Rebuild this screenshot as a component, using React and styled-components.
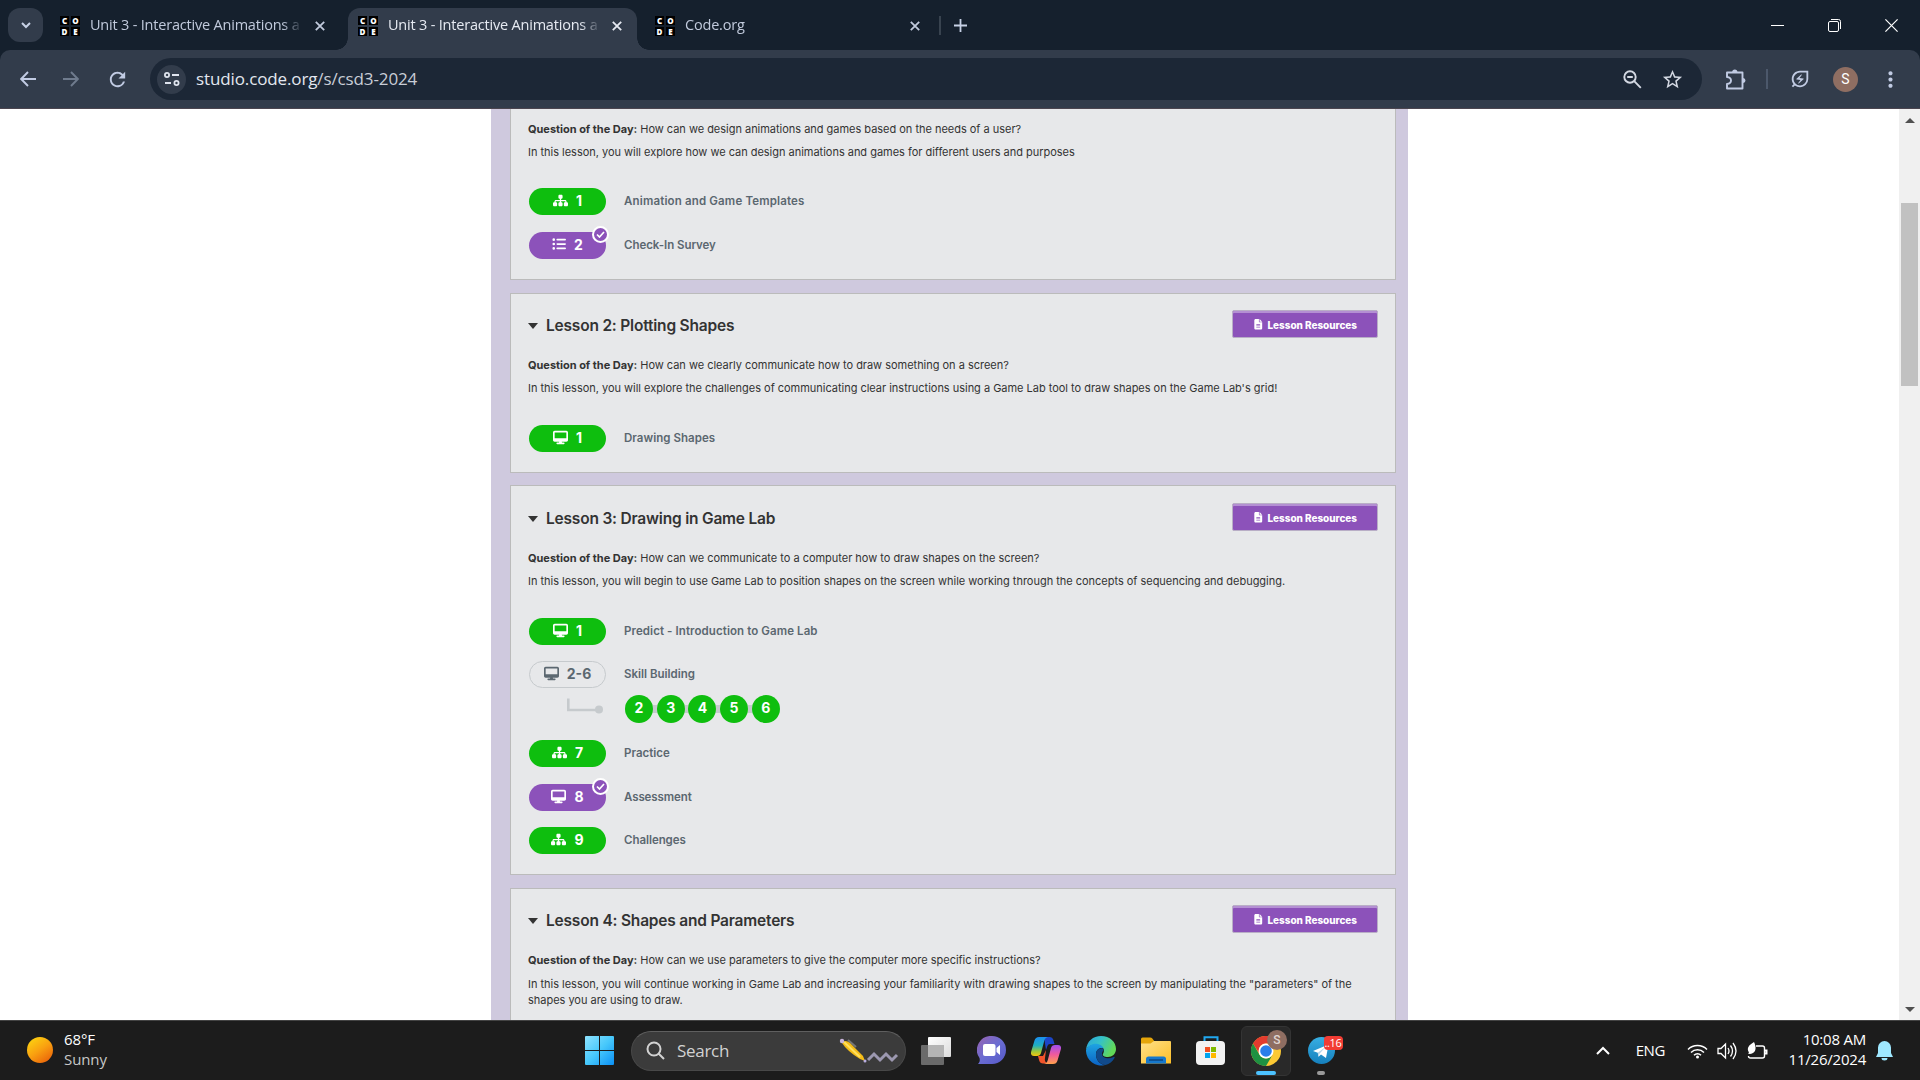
import React from 'react';
import styled, { createGlobalStyle, css } from 'styled-components';
import { FaSitemap, FaListUl, FaDesktop, FaFileLines, FaCheck } from 'react-icons/fa6';
import {
  MdRefresh, MdZoomOut, MdStarBorder, MdOutlineEnergySavingsLeaf, MdMoreVert,
} from 'react-icons/md';

const Global = createGlobalStyle`
  * { box-sizing: border-box; }
  body { margin: 0; overflow: hidden; background: #fff; }
  svg { display: block; flex: none; }
  p, h2 { margin: 0; }
`;

const ui = "'Open Sans', 'Noto Sans', sans-serif";
const body = "Inter, 'Open Sans', sans-serif";

const Screen = styled.div`
  width: 1920px;
  height: 1080px;
  display: flex;
  flex-direction: column;
  overflow: hidden;
  font-family: ${ui};
  white-space: nowrap;
`;
const Spacer = styled.div`
  height: ${p => p.$h}px;
`;

/* ---------- browser chrome ---------- */
const TabStrip = styled.header`
  height: 50px;
  flex: none;
  display: flex;
  align-items: center;
  background: #15202d;
  padding-left: 8px;
  color: #c7d1e6;
`;
const TabSearch = styled.div`
  width: 35px;
  height: 34px;
  border-radius: 12px;
  background: #323c4b;
  display: grid;
  place-items: center;
  margin-right: 7px;
`;
const Tab = styled.div`
  position: relative;
  width: ${p => p.$w}px;
  height: 42px;
  margin-top: 8px;
  margin-left: ${p => p.$ml || 0}px;
  padding: 0 ${p => p.$pr}px 7px 10px;
  display: flex;
  align-items: center;
  border-radius: 12px 12px 0 0;
  color: ${p => (p.$active ? '#e6eaf2' : '#c1cadc')};
  background: ${p => (p.$active ? '#323c4b' : 'transparent')};
  ${p => p.$active && css`
    &::before, &::after {
      content: '';
      position: absolute;
      bottom: 0;
      width: 12px;
      height: 12px;
    }
    &::before { left: -12px; background: radial-gradient(circle at 0 0, transparent 11.5px, #323c4b 12px); }
    &::after { right: -12px; background: radial-gradient(circle at 100% 0, transparent 11.5px, #323c4b 12px); }
  `}
`;
const TabTitle = styled.span`
  width: 218px;
  margin-left: 10px;
  padding-bottom: 1px;
  font-size: 14.5px;
  line-height: 22px;
  letter-spacing: -0.2px;
  mask-image: linear-gradient(90deg, #000 192px, transparent 213px);
`;
const TabClose = styled.span`
  margin-left: auto;
`;
const FavGrid = styled.span`
  width: 20px;
  height: 20px;
  flex: none;
  display: grid;
  grid-template-columns: 9px 9px;
  grid-template-rows: 9px 9px;
  gap: 2px;
`;
const FavCell = styled.span`
  background: #000;
  color: #fff;
  font: 800 8px/9px ${ui};
  text-align: center;
`;
const StripDivider = styled.span`
  width: 2px;
  height: 19px;
  background: #38434f;
  margin: 0 13px 0 12px;
`;
const WindowControls = styled.div`
  margin-left: auto;
  display: flex;
  align-items: center;
  gap: 44px;
  padding-right: 22px;
  color: #fff;
`;
const ToolbarBack = styled.div`
  flex: none;
  background: #15202d;
`;
const Toolbar = styled.div`
  height: 59px;
  display: flex;
  align-items: center;
  background: #323c4b;
  border-radius: 10px 10px 0 0;
  border-bottom: 1px solid #4b454f;
  color: #c1cbe3;
`;
const NavButtons = styled.div`
  width: 150px;
  display: flex;
  align-items: center;
  padding-left: 20px;
  gap: 27px;
`;
const Omnibox = styled.div`
  width: 1552px;
  height: 42px;
  border-radius: 21px;
  background: #1c2736;
  display: flex;
  align-items: center;
  padding: 0 18px 0 7px;
`;
const SiteInfo = styled.span`
  width: 29px;
  height: 29px;
  border-radius: 50%;
  background: #323c4b;
  display: grid;
  place-items: center;
`;
const Url = styled.span`
  flex: 1;
  margin-left: 10px;
  font-size: 17px;
  letter-spacing: -0.12px;
  line-height: 26px;
  color: #e3e7f0;
`;
const UrlPath = styled.span`
  color: #c9cdd6;
`;
const OmniIcons = styled.span`
  display: flex;
  gap: 17px;
  color: #d3d8e2;
`;
const ToolbarRight = styled.div`
  flex: 1;
  display: flex;
  align-items: center;
  padding-left: 23px;
`;
const ToolbarDivider = styled.span`
  width: 2px;
  height: 20px;
  background: #4c586b;
  margin: 0 21px 0 20px;
`;
const Avatar = styled.span`
  width: 25px;
  height: 25px;
  border-radius: 50%;
  background: #8f6e62;
  color: #fff;
  font: 400 14px/25px Roboto, sans-serif;
  text-align: center;
  margin: 0 20px 0 22px;
`;

/* ---------- page ---------- */
const Viewport = styled.div`
  height: 911px;
  flex: none;
  display: flex;
  overflow: hidden;
  background: #fff;
`;
const PageArea = styled.main`
  width: 1899px;
  padding-left: 491px;
`;
const Unit = styled.div`
  width: 917px;
  height: 100%;
  padding: 0 12px 0 19px;
  background: #cfc9de;
  display: flex;
  flex-direction: column;
  font-family: ${body};
`;
const Card = styled.section`
  height: ${p => p.$h}px;
  flex: none;
  margin-bottom: ${p => p.$gap}px;
  border: 1px solid #bbb;
  border-top-width: ${p => (p.$cut ? 0 : 1)}px;
  background: #e7e8ea;
  padding: ${p => p.$top ?? 16}px 17px 0 17px;
  color: #333;
`;
const CardHead = styled.div`
  display: flex;
  align-items: flex-start;
  height: 47px;
`;
const Caret = styled.span`
  width: 0;
  border: 5px solid transparent;
  border-top: 6px solid #333;
  border-bottom: 0;
  margin: 13px 8px 0 0;
`;
const CardTitle = styled.h2`
  flex: 1;
  font-size: 15.5px;
  font-weight: 600;
  line-height: 31px;
  letter-spacing: -0.2px;
`;
const ResourceButton = styled.button`
  width: 146px;
  height: 28px;
  padding: 1px 0 0;
  display: flex;
  align-items: center;
  justify-content: center;
  gap: 4px;
  border: 1px solid #b9aec6;
  box-shadow: inset 0 2px 0 #b48fd3;
  border-radius: 2px;
  background: #8c52ba;
  color: #fff;
  font: 800 10px/16px ${body};
  letter-spacing: -0.05px;
`;
const Desc = styled.p`
  height: ${p => p.$h || 23}px;
  font-size: 11px;
  line-height: 16px;
  letter-spacing: -0.02px;
`;
const Strong = styled.strong`
  font-weight: 700;
`;
const Level = styled.div`
  display: flex;
  align-items: center;
  height: 27px;
  margin: 0 0 ${p => p.$gap}px 1px;
`;
const tones = { green: '#0ebe0e', purple: '#8c52ba' };
const Pill = styled.span`
  position: relative;
  width: 77px;
  height: 27px;
  border-radius: 14px;
  padding-bottom: 3px;
  display: flex;
  align-items: center;
  justify-content: center;
  gap: 8px;
  background: ${p => tones[p.$tone] || 'transparent'};
  border: ${p => (tones[p.$tone] ? 'none' : '1px solid #c6cacd')};
  color: ${p => (tones[p.$tone] ? '#fff' : '#5b6770')};
  font-size: 14px;
  font-weight: 700;
`;
const CheckBadge = styled.span`
  position: absolute;
  top: -6px;
  right: -3px;
  width: 17px;
  height: 17px;
  border-radius: 50%;
  border: 2px solid #fff;
  background: #8c52ba;
  display: grid;
  place-items: center;
`;
const LevelName = styled.span`
  margin-left: 18px;
  padding-bottom: 1px;
  font-size: 11.5px;
  font-weight: 600;
  color: #5b6770;
  letter-spacing: ${p => p.$track || 0}px;
`;
const BubbleRow = styled.div`
  display: flex;
  align-items: center;
  height: 28px;
  margin: 7px 0 17px;
  padding-left: 39px;
`;
const Elbow = styled.span`
  width: 58px;
  margin-top: -7px;
`;
const Bubble = styled.span`
  width: 28px;
  height: 28px;
  border-radius: 50%;
  background: #0ebe0e;
  color: #fff;
  font-size: 14px;
  font-weight: 700;
  line-height: 25px;
  text-align: center;
`;
const Link = styled.span`
  width: 3.7px;
  height: 8px;
  background: #c6cacd;
`;
const Scrollbar = styled.div`
  width: 21px;
  background: #f0f0f0;
  display: flex;
  flex-direction: column;
  align-items: center;
  padding: 9px 0 8px;
`;
const ScrollArrow = styled.span`
  border: 5px solid transparent;
  border-${p => (p.$up ? 'bottom' : 'top')}: 5px solid #505050;
  border-${p => (p.$up ? 'top' : 'bottom')}: 0;
`;
const ScrollThumb = styled.span`
  width: 17px;
  height: 183px;
  margin: 80px 0 auto;
  background: #c1c1c1;
`;

/* ---------- taskbar ---------- */
const Taskbar = styled.footer`
  height: 60px;
  flex: none;
  display: flex;
  align-items: center;
  background: #1c1c1c;
  border-top: 1px solid #434343;
  color: #fff;
`;
const Weather = styled.div`
  width: 585px;
  padding-left: 27px;
  display: flex;
  align-items: center;
  gap: 11px;
  font-size: 15px;
  line-height: 20px;
  letter-spacing: -0.1px;
`;
const WeatherText = styled.div`
  padding-bottom: 4px;
`;
const Sun = styled.span`
  width: 26px;
  height: 26px;
  margin-bottom: 2px;
  border-radius: 50%;
  background: linear-gradient(145deg, #fcd010 10%, #f9a010 50%, #ea640a 90%);
`;
const Muted = styled.div`
  color: #c8c8c8;
`;
const SearchBox = styled.div`
  width: 275px;
  height: 40px;
  margin: 0 2.5px 0 17px;
  padding: 0 6px 0 14px;
  border-radius: 20px;
  border: 1px solid #484848;
  border-top-color: #5f5f5f;
  background: #3b3b3b;
  display: flex;
  align-items: center;
  font-size: 17px;
  color: #d2d2d2;
`;
const SearchLabel = styled.span`
  flex: 1;
  margin-left: 12px;
  letter-spacing: -0.3px;
`;
const Apps = styled.div`
  display: flex;
  align-items: center;
`;
const AppSlot = styled.span`
  position: relative;
  width: 55px;
  height: 50px;
  display: grid;
  place-items: center;
`;
const ActiveApp = styled(AppSlot)`
  width: 50px;
  margin: 0 2.5px;
  border-radius: 6px;
  border: 1px solid #343434;
  background: #292929;
`;
const RunMark = styled.span`
  position: absolute;
  bottom: ${p => (p.$wide ? 0 : 1)}px;
  left: 50%;
  width: ${p => (p.$wide ? 20 : 8)}px;
  height: 4px;
  margin-left: ${p => (p.$wide ? -10 : -4)}px;
  border-radius: 2px;
  background: ${p => (p.$wide ? '#4cc2ff' : '#9a9a9a')};
`;
const MiniAvatar = styled.span`
  position: absolute;
  top: 3px;
  right: 3px;
  width: 20px;
  height: 20px;
  border-radius: 50%;
  background: #8f6e62;
  color: #e0d6d2;
  font: 500 12px/20px Roboto, sans-serif;
  text-align: center;
`;
const Count = styled.span`
  position: absolute;
  top: 10px;
  left: 30px;
  width: 19px;
  height: 14px;
  border-radius: 4px;
  background: #f23c34;
  font-size: 11px;
  line-height: 14px;
  text-align: center;
  letter-spacing: -0.3px;
`;
const Tray = styled.div`
  margin-left: auto;
  padding-right: 27px;
  display: flex;
  align-items: center;
  font-size: 15px;
`;
const Lang = styled.span`
  margin: 0 22px 0 26px;
  padding-bottom: 1px;
  letter-spacing: -0.4px;
`;
const TrayIcons = styled.span`
  display: flex;
  align-items: center;
  gap: 9px;
`;
const Clock = styled.div`
  margin: 0 10px 0 20px;
  padding-bottom: 4px;
  width: 78px;
  display: flex;
  flex-direction: column;
  align-items: flex-end;
  line-height: 20px;
  letter-spacing: -0.22px;
`;

const Favicon = () => (
  <FavGrid>{['C', 'O', 'D', 'E'].map(c => <FavCell key={c}>{c}</FavCell>)}</FavGrid>
);
const Stroke = ({ w, h = w, d, sw = 2 }) => (
  <svg width={w} height={h} viewBox={`0 0 ${w} ${h}`} fill="none" stroke="currentColor" strokeWidth={sw}>
    <path d={d} />
  </svg>
);
const CloseX = () => <Stroke w={10} d="M.8.8 9.2 9.2M9.2.8.8 9.2" sw={1.8} />;

const ICONS = { site: FaSitemap, list: FaListUl, desk: FaDesktop };

function LevelRow({ tone, icon, num, name, done, gap = 17, track }) {
  const Icon = ICONS[icon];
  return (
    <Level $gap={gap}>
      <Pill $tone={tone}>
        <Icon size={icon === 'list' ? 14 : 15} />
        {num}
        {done && (
          <CheckBadge>
            <svg width="9" height="7" viewBox="0 0 9 7" fill="none" stroke="#fff" strokeWidth="1.7"><path d="M1 3.500L3.500 6 8 1" /></svg>
          </CheckBadge>
        )}
      </Pill>
      <LevelName $track={track}>{name}</LevelName>
    </Level>
  );
}

function LessonHead({ title }) {
  return (
    <CardHead>
      <Caret />
      <CardTitle>{title}</CardTitle>
      <ResourceButton><FaFileLines size={10.5} />Lesson Resources</ResourceButton>
    </CardHead>
  );
}

const Question = ({ children, h }) => (
  <Desc $h={h}><Strong>Question of the Day:</Strong> {children}</Desc>
);

const Puzzle = () => (
  <svg width="21" height="21" viewBox="0 0 21 21">
    <path d="M2 3.500h15.500v16H2v-4.500q4-.5 4-3.500T2 8z" fill="none" stroke="currentColor" strokeWidth="1.900" strokeLinejoin="round" />
    <path d="M7.200 3a2.600 2.600 0 015.200 0zM18 9a2.500 2.500 0 010 5z" fill="currentColor" />
  </svg>
);

const Pen = () => (
  <svg width="60" height="26" viewBox="0 0 60 26" fill="none">
    <path d="M29 22l6-6 6 6 6-6 6 6 5-5" stroke="#9c98b0" strokeWidth="3" />
    <path d="M9 2l8 7" stroke="#777" strokeWidth="2" />
    <path d="M3 5q3-4 8 0l13 13 2 5-5-2Q8 13 3 5z" fill="#f5bd18" />
    <path d="M5 4l16 15" stroke="#ffdf60" strokeWidth="2" />
    <circle cx="3" cy="3" r="2.2" fill="#c9b5dc" />
    <circle cx="26" cy="23" r="1.5" fill="#b9aee0" />
  </svg>
);

const Grad = ({ id, a, b, m }) => (
  <linearGradient id={id} x1="0" y1="0" x2="1" y2="1">
    <stop stopColor={a} />{m && <stop offset=".5" stopColor={m} />}<stop offset="1" stopColor={b} />
  </linearGradient>
);

const WindowsLogo = () => (
  <svg width="29" height="29" viewBox="0 0 29 29">
    <defs><linearGradient id="win" gradientUnits="userSpaceOnUse" x1="0" y1="0" x2="29" y2="29"><stop stopColor="#8fe3ff" /><stop offset=".5" stopColor="#47c8fb" /><stop offset="1" stopColor="#0b90f5" /></linearGradient></defs>
    <path fill="url(#win)" d="M0 1a1 1 0 011-1h13v14H0zM15 0h13a1 1 0 011 1v13H15zM0 15h14v14H1a1 1 0 01-1-1zM15 15h14v13a1 1 0 01-1 1H15z" />
  </svg>
);
const TaskView = () => (
  <svg width="30" height="28" viewBox="0 0 30 28">
    <defs><Grad id="tv" a="#fff" b="#dcdcdc" /></defs>
    <rect x="0" y="8" width="23" height="20" rx="1" fill="#6a6a6a" />
    <rect x="7" y="0" width="23" height="20" rx="1" fill="url(#tv)" />
    <rect x="7" y="8" width="16" height="12" fill="#b4b4b4" />
  </svg>
);
const Chat = () => (
  <svg width="29" height="29" viewBox="0 0 29 29">
    <defs><Grad id="chat" a="#9a63b0" m="#6a6cd2" b="#5558c8" /></defs>
    <path fill="url(#chat)" d="M15 0a14 14 0 110 28H1c2-2 2-4 1.500-6A14 14 0 0115 0z" />
    <rect x="6" y="8" width="12.500" height="12" rx="2" fill="#fff" />
    <path fill="#fff" d="M19.500 12l3.500-3v10l-3.500-3z" />
  </svg>
);
const Copilot = () => (
  <svg width="30" height="28" viewBox="0 0 30 28">
    <defs>
      <linearGradient id="cpa" x1="0" y1="0" x2="0" y2="1"><stop stopColor="#1b8ff0" /><stop offset=".45" stopColor="#20b0c0" /><stop offset=".75" stopColor="#9bc83c" /><stop offset="1" stopColor="#f5c50c" /></linearGradient>
      <linearGradient id="cpb" x1="0" y1="0" x2="0" y2="1"><stop stopColor="#a04df0" /><stop offset=".5" stopColor="#f05a9c" /><stop offset="1" stopColor="#ffa04c" /></linearGradient>
    </defs>
    <path fill="#1c45c8" d="M13 0h6q2.500 0 3.200 2.500L23.500 7H19q-2 0-2.600 2L15 13z" />
    <path fill="#f2552c" d="M7 19h5l3-6-1 8q-1 4 3 5.500h-5q-3 0-3.800-3z" />
    <path fill="url(#cpa)" d="M8 0h9q-3 .5-3.800 4L10 16q-.8 3-4 3H3q-4 0-2.800-4.500L3.500 3.500Q4.500 0 8 0z" />
    <path fill="url(#cpb)" d="M22 27h-9q3-.5 3.800-4L20 11q.8-3 4-3h3q4 0 2.800 4.500L26.500 23.500Q25.500 27 22 27z" />
  </svg>
);
const Edge = () => (
  <svg width="30" height="30" viewBox="0 0 30 30">
    <defs>
      <linearGradient id="ea" x1="0" y1="0" x2="1" y2=".4"><stop stopColor="#2aa4dc" /><stop offset=".5" stopColor="#35c1c8" /><stop offset="1" stopColor="#62d958" /></linearGradient>
      <linearGradient id="eb" x1="0" y1="0" x2="0" y2="1"><stop stopColor="#1ea4e2" /><stop offset="1" stopColor="#0b62c4" /></linearGradient>
    </defs>
    <path fill="url(#ea)" d="M0 14C1 5 7 0 15 0c9 0 15 6 15 13 0 5-4 8-8 8-4 0-6-1.500-5-3 2-3 1-8-5-9C6 8 2 10 0 14z" />
    <path fill="url(#eb)" d="M0 14c2-4.500 7-7 12-6 3 .6 5 2.500 5.500 4.500-4-1.500-8 1.500-7.500 7 .5 5 4 9 9 9.500A15 15 0 010 15z" />
    <path fill="#114a8b" d="M17 12.500c-5-1-7 3-7 6 0 6 4.500 10 9.500 10.500 4-1 7-3.500 9-7 .5-1-.3-1.400-1-1-5 2.500-11 1-11.500-2.500-.2-2 .5-3 1.500-4z" />
  </svg>
);
const Folder = () => (
  <svg width="30" height="27" viewBox="0 0 30 27">
    <defs><Grad id="fo" a="#ffe08a" b="#fcbf28" /></defs>
    <path fill="#e5a50a" d="M0 2q0-1.500 1.500-1.500H9q1.500 0 2.500 1.200L14 5v6H0z" />
    <path fill="url(#fo)" d="M0 6.500h9.500L13 4h16q1 0 1 1v21.500H0z" />
    <path fill="#1678cc" d="M5 26.500V22q0-2.500 2.500-2.500h15Q25 19.500 25 22v4.500z" />
    <path stroke="#0c3f76" strokeWidth="1.300" d="M8 23h14" />
  </svg>
);
const Store = () => (
  <svg width="30" height="30" viewBox="0 0 30 30">
    <path d="M8.500 6V1.200h13V6" fill="none" stroke="#20a8f0" strokeWidth="2" />
    <rect y="5" width="29" height="24" rx="4" fill="#f2f2f2" />
    <path fill="#f25022" d="M9 11h5v5H9z" /><path fill="#7fba00" d="M15 11h5v5h-5z" />
    <path fill="#00a4ef" d="M9 17h5v5H9z" /><path fill="#ffb900" d="M15 17h5v5h-5z" />
  </svg>
);
const Chrome = () => (
  <svg width="30" height="30" viewBox="0 0 30 30">
    <circle cx="15" cy="15" r="15" fill="#fcc934" />
    <path fill="#e33b2e" d="M2 7.500A15 15 0 0128 7.500H15a7.500 7.500 0 00-6.500 3.800L8 17z" />
    <path fill="#1e9142" d="M2 7.500A15 15 0 0015 30l6.500-11.200A7.500 7.500 0 018.500 18.800z" />
    <circle cx="15" cy="15" r="7.500" fill="#fff" /><circle cx="15" cy="15" r="5.800" fill="#2b7de9" />
  </svg>
);
const Telegram = () => (
  <svg width="27" height="27" viewBox="0 0 27 27">
    <defs><linearGradient id="tg" x1="0" y1="0" x2="0" y2="1"><stop stopColor="#37aee2" /><stop offset="1" stopColor="#1680bd" /></linearGradient></defs>
    <circle cx="13.500" cy="13.500" r="13.500" fill="url(#tg)" />
    <path fill="#fff" d="M5 14L20.500 7.500 18 21l-5-3.600-2.500 2.400-.7-4z" /><path fill="#b5d5ea" d="M9.800 15.800l8-6-6.300 7-1 3z" />
  </svg>
);

export default function App() {
  return (
    <Screen>
      <Global />
      <TabStrip>
        <TabSearch><Stroke w={10} h={7} d="M1 1l4 4 4-4" sw={2} /></TabSearch>
        <Tab $w={298} $pr={23}><Favicon /><TabTitle>Unit 3 - Interactive Animations a</TabTitle><TabClose><CloseX /></TabClose></Tab>
        <Tab $active $w={289} $pr={15}><Favicon /><TabTitle>Unit 3 - Interactive Animations a</TabTitle><TabClose><CloseX /></TabClose></Tab>
        <Tab $w={282} $ml={8} $pr={7}><Favicon /><TabTitle>Code.org</TabTitle><TabClose><CloseX /></TabClose></Tab>
        <StripDivider />
        <Stroke w={13} d="M6.500 0v13M0 6.500h13" sw={1.8} />
        <WindowControls>
          <Stroke w={13} d="M0 6.500h13" sw={1} />
          <svg width="13" height="13" viewBox="0 0 13 13" fill="none" stroke="currentColor">
            <rect x=".5" y="2.500" width="10" height="10" rx="1.500" /><path d="M3 .5h7.500q2 0 2 2V10" />
          </svg>
          <Stroke w={13} d="M.4.4l12.200 12.200M12.600.4L.4 12.600" sw={1.2} />
        </WindowControls>
      </TabStrip>
      <ToolbarBack>
        <Toolbar>
          <NavButtons>
            <Stroke w={16} d="M16 8H1.500M8 1L1.200 8 8 15" sw={1.9} />
            <svg width="16" height="16" viewBox="0 0 16 16" fill="none" stroke="#6f7b8d" strokeWidth="1.900"><path d="M0 8h14.500M8 1l6.800 7L8 15" /></svg>
            <MdRefresh size={23} />
          </NavButtons>
          <Omnibox>
            <SiteInfo>
              <svg width="16" height="14" viewBox="0 0 16 14" fill="none" stroke="#dfe4ee" strokeWidth="1.800">
                <circle cx="3" cy="3" r="2.100" /><path d="M8 3h7M1 11h6" /><circle cx="12.500" cy="11" r="2.100" />
              </svg>
            </SiteInfo>
            <Url>studio.code.org<UrlPath>/s/csd3-2024</UrlPath></Url>
            <OmniIcons>
              <svg width="23" height="23" viewBox="0 0 23 23" fill="none" stroke="currentColor" strokeWidth="1.900">
                <circle cx="9" cy="9" r="5.700" /><path d="M13.200 13.200l6.600 6.600M6.200 9h5.600" />
              </svg>
              <MdStarBorder size={23} />
            </OmniIcons>
          </Omnibox>
          <ToolbarRight>
            <Puzzle />
            <Spacer />
            <ToolbarDivider />
            <MdOutlineEnergySavingsLeaf size={22} />
            <Avatar>S</Avatar>
            <MdMoreVert size={25} />
          </ToolbarRight>
        </Toolbar>
      </ToolbarBack>

      <Viewport>
        <PageArea>
          <Unit>
            <Card $cut $h={171} $top={12} $gap={13}>
              <Question>How can we design animations and games based on the needs of a user?</Question>
              <Desc $h={44}>In this lesson, you will explore how we can design animations and games for different users and purposes</Desc>
              <LevelRow tone="green" icon="site" num="1" name="Animation and Game Templates" track={0.16} />
              <LevelRow tone="purple" icon="list" num="2" name="Check-In Survey" done track={-0.05} />
            </Card>
            <Card $h={180} $gap={12}>
              <LessonHead title="Lesson 2: Plotting Shapes" />
              <Question>How can we clearly communicate how to draw something on a screen?</Question>
              <Desc $h={45}>In this lesson, you will explore the challenges of communicating clear instructions using a Game Lab tool to draw shapes on the Game Lab's grid!</Desc>
              <LevelRow tone="green" icon="desk" num="1" name="Drawing Shapes" track={0.04} />
            </Card>
            <Card $h={390} $top={17} $gap={13}>
              <LessonHead title="Lesson 3: Drawing in Game Lab" />
              <Question>How can we communicate to a computer how to draw shapes on the screen?</Question>
              <Desc $h={45}>In this lesson, you will begin to use Game Lab to position shapes on the screen while working through the concepts of sequencing and debugging.</Desc>
              <LevelRow tone="green" icon="desk" num="1" name="Predict - Introduction to Game Lab" gap={16} track={0.09} />
              <LevelRow icon="desk" num="2-6" name="Skill Building" gap={0} />
              <BubbleRow>
                <Elbow>
                  <svg width="36" height="17" viewBox="0 0 36 17"><path d="M1.300 1.500v11.500h30" fill="none" stroke="#c6cacd" strokeWidth="2.600" /><circle cx="32" cy="12.500" r="4" fill="#c6cacd" /></svg>
                </Elbow>
                {[2, 3, 4, 5, 6].map(n => (
                  <React.Fragment key={n}>{n > 2 && <Link />}<Bubble>{n}</Bubble></React.Fragment>
                ))}
              </BubbleRow>
              <LevelRow tone="green" icon="site" num="7" name="Practice" />
              <LevelRow tone="purple" icon="desk" num="8" name="Assessment" done gap={16} track={-0.1} />
              <LevelRow tone="green" icon="site" num="9" name="Challenges" track={-0.05} />
            </Card>
            <Card $h={190} $gap={0}>
              <LessonHead title="Lesson 4: Shapes and Parameters" />
              <Question h={24}>How can we use parameters to give the computer more specific instructions?</Question>
              <Desc $h={15.5}>In this lesson, you will continue working in Game Lab and increasing your familiarity with drawing shapes to the screen by manipulating the "parameters" of the</Desc>
              <Desc>shapes you are using to draw.</Desc>
            </Card>
          </Unit>
        </PageArea>
        <Scrollbar>
          <ScrollArrow $up />
          <ScrollThumb />
          <ScrollArrow />
        </Scrollbar>
      </Viewport>

      <Taskbar>
        <Weather>
          <Sun />
          <WeatherText><div>68°F</div><Muted>Sunny</Muted></WeatherText>
        </Weather>
        <WindowsLogo />
        <SearchBox>
          <Stroke w={19} d="M13 13l5 5M8 1.500a6.500 6.500 0 100 13 6.500 6.500 0 000-13z" sw={2} />
          <SearchLabel>Search</SearchLabel>
          <Pen />
        </SearchBox>
        <Apps>
          <AppSlot><TaskView /></AppSlot>
          <AppSlot><Chat /></AppSlot>
          <AppSlot><Copilot /></AppSlot>
          <AppSlot><Edge /></AppSlot>
          <AppSlot><Folder /></AppSlot>
          <AppSlot><Store /></AppSlot>
          <ActiveApp><Chrome /><MiniAvatar>S</MiniAvatar><RunMark $wide /></ActiveApp>
          <AppSlot><Telegram /><Count>..16</Count><RunMark /></AppSlot>
        </Apps>
        <Tray>
          <Stroke w={14} h={9} d="M1 8l6-6 6 6" sw={2} />
          <Lang>ENG</Lang>
          <TrayIcons>
            <svg width="21" height="16" viewBox="0 0 21 16" fill="none" stroke="#fff" strokeWidth="1.500">
              <path d="M1 6.500a13.500 13.500 0 0119 0M4 9.500a9.200 9.200 0 0113 0M7 12.300a5 5 0 017 0" /><circle cx="10.500" cy="14" r="1.500" fill="#fff" stroke="none" />
            </svg>
            <svg width="21" height="18" viewBox="0 0 21 18" fill="none" stroke="#fff" strokeWidth="1.300">
              <path d="M1 6.500h3L8.500 2v14L4 11.500H1zM11 6q2 3 0 6M13.500 3.500q4 5.500 0 11M16 1q6 8 0 16" />
            </svg>
            <svg width="21" height="18" viewBox="0 0 21 18" fill="none" stroke="#fff" strokeWidth="1.400">
              <path d="M9 4h6.500q2 0 2 2v8q0 2-2 2H3.500q-2 0-2-2" /><path d="M18 8.500h1.500v3H18" strokeWidth="2" />
              <path fill="#fff" stroke="none" d="M7 0c2 4 2.500 9-1 11q-3 1.500-5 .5l1-1C-1 6 2 3 7 0z" />
            </svg>
          </TrayIcons>
          <Clock><span>10:08 AM</span><span>11/26/2024</span></Clock>
          <svg width="17" height="20" viewBox="0 0 17 20" fill="#9fe8ff">
            <path d="M8.500 0a6.500 6.500 0 016.500 6.500V12l2 4H0l2-4V6.500A6.500 6.500 0 018.500 0zM5.500 17h6a3 2.500 0 01-6 0z" />
          </svg>
        </Tray>
      </Taskbar>
    </Screen>
  );
}
